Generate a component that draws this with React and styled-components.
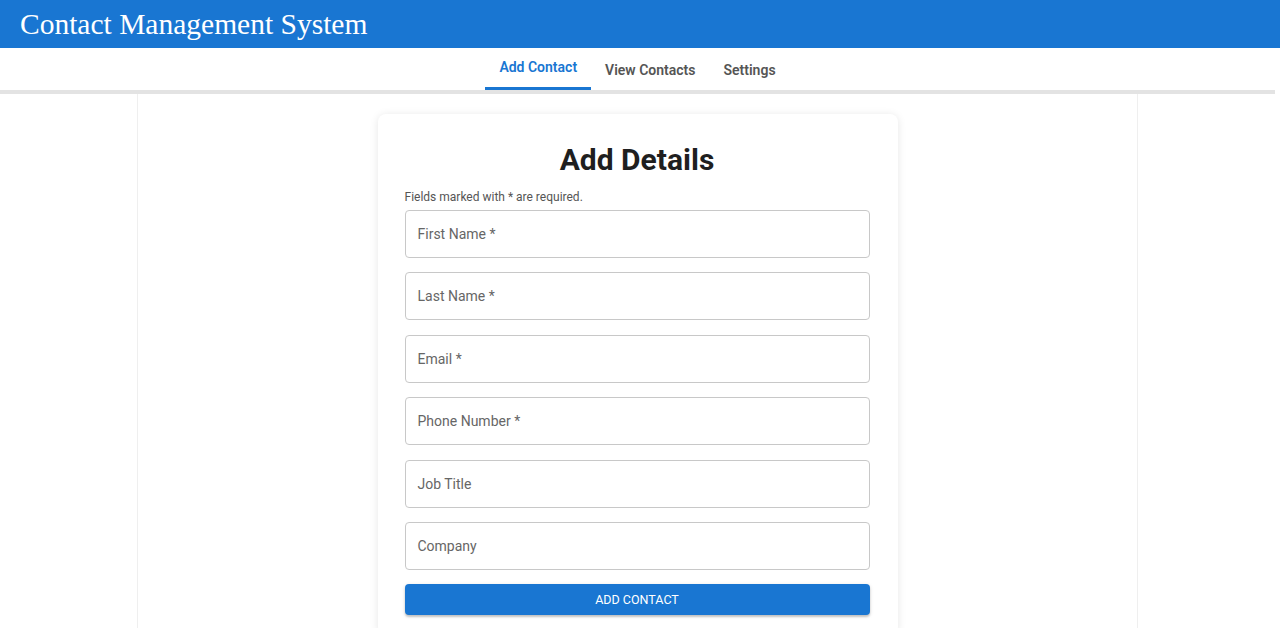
import React from "react";
import styled, { createGlobalStyle } from "styled-components";

const Global = createGlobalStyle`
  html, body { margin: 0; padding: 0; background: #fff; }
  body { font-family: Roboto, "Liberation Sans", sans-serif; overflow: hidden; }
  * { box-sizing: border-box; }
`;

const Header = styled.header`
  height: 48px;
  background: #1976d2;
  display: flex;
  align-items: center;
  padding-left: 20px;
`;

const Brand = styled.h1`
  margin: 0;
  font-family: "Liberation Serif", "Times New Roman", serif;
  font-weight: 400;
  font-size: 29.5px;
  color: #fff;
  line-height: 1;
  margin-top: 2px;
`;

const Body = styled.div`
  padding-right: 5px;
`;

const TabBar = styled.nav`
  height: 46px;
  display: flex;
  justify-content: center;
  border-bottom: 4px solid #e3e3e3;
`;

const Tab = styled.button`
  all: unset;
  box-sizing: border-box;
  position: relative;
  height: 42px;
  padding: 0 14px ${(p) => (p.$active ? "4px" : "0")};
  margin-top: ${(p) => (p.$active ? "0" : "1px")};
  display: flex;
  align-items: center;
  font-family: Roboto, sans-serif;
  font-size: 14px;
  font-weight: 600;
  color: ${(p) => (p.$active ? "#1976d2" : "#555")};
  cursor: pointer;
  &::after {
    content: "";
    display: ${(p) => (p.$active ? "block" : "none")};
    position: absolute;
    left: 0;
    right: 0;
    bottom: 0;
    height: 3px;
    background: #1976d2;
  }
`;

const Container = styled.main`
  width: 1001px;
  margin: 0 auto;
  min-height: 540px;
  border-left: 1px solid #efefef;
  border-right: 1px solid #efefef;
  padding-top: 20px;
  display: flex;
  justify-content: center;
`;

const Card = styled.section`
  width: 520px;
  background: #fff;
  border-radius: 8px;
  box-shadow: 0 1px 8px rgba(0, 0, 0, 0.1);
  padding: 28px 28px 20px 27px;
  display: flex;
  flex-direction: column;
`;

const Title = styled.h2`
  margin: 0;
  text-align: center;
  font-size: 30px;
  font-weight: 700;
  color: #1f1f1f;
  line-height: 36px;
`;

const Note = styled.p`
  margin: 11px 0 5px;
  font-size: 12px;
  color: #555;
  line-height: 16px;
`;

const Fields = styled.div`
  display: flex;
  flex-direction: column;
  gap: 14.4px;
`;

const Field = styled.div`
  height: 48px;
  border: 1px solid #c8c8c8;
  border-radius: 4px;
  display: flex;
  align-items: center;
  padding: 0 12px;
  font-size: 14px;
  color: #666;
`;

const Submit = styled.button`
  margin-top: 14px;
  height: 31px;
  border: none;
  border-radius: 4px;
  background: #1976d2;
  color: #fff;
  font-family: Roboto, sans-serif;
  font-size: 12.5px;
  font-weight: 400;
  text-transform: uppercase;
  box-shadow: 0 2px 2px rgba(0, 0, 0, 0.18), 0 1px 4px rgba(0, 0, 0, 0.12);
  cursor: pointer;
`;

const fields = ["First Name *", "Last Name *", "Email *", "Phone Number *", "Job Title", "Company"];

export default function App() {
  return (
    <>
      <Global />
      <Header>
        <Brand>Contact Management System</Brand>
      </Header>
      <Body>
        <TabBar>
          <Tab $active>Add Contact</Tab>
          <Tab>View Contacts</Tab>
          <Tab>Settings</Tab>
        </TabBar>
        <Container>
          <Card>
            <Title>Add Details</Title>
            <Note>Fields marked with * are required.</Note>
            <Fields>
              {fields.map((f) => (
                <Field key={f}>{f}</Field>
              ))}
            </Fields>
            <Submit>Add Contact</Submit>
          </Card>
        </Container>
      </Body>
    </>
  );
}
